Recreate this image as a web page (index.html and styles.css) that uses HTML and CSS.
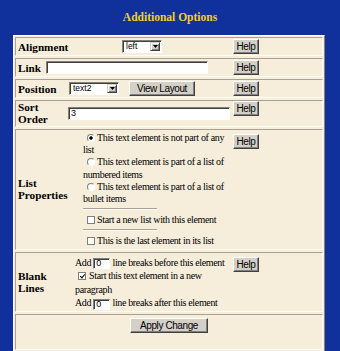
FILE: index.html
```html
<!DOCTYPE html>
<html>
<head>
  <meta charset="utf-8">
  <title>Additional Options</title>
  <link rel="stylesheet" href="styles.css">
</head>
<body>
    <h1 class="title">Additional Options</h1>
    <form class="options">
        <div class="row row-align">
            <div class="label">Alignment</div>
            <div class="field">
                <span class="select select-align">
                    <span class="select-text">left</span>
                    <span class="select-btn"><svg width="5" height="3" viewBox="0 0 5 3"><path d="M0 0h5L2.5 3z" fill="#000"/></svg></span>
                </span>
            </div>
            <button type="button" class="btn help">Help</button>
        </div>
        <div class="row row-link">
            <div class="label">Link</div>
            <div class="field"><input type="text" class="text-input wide"></div>
            <button type="button" class="btn help">Help</button>
        </div>
        <div class="row row-pos">
            <div class="label">Position</div>
            <div class="field">
                <span class="select select-pos">
                    <span class="select-text">text2</span>
                    <span class="select-btn"><svg width="5" height="3" viewBox="0 0 5 3"><path d="M0 0h5L2.5 3z" fill="#000"/></svg></span>
                </span>
                <button type="button" class="btn view-btn">View Layout</button>
            </div>
            <button type="button" class="btn help">Help</button>
        </div>
        <div class="row row-sort">
            <div class="label">Sort<br>Order</div>
            <div class="field"><input type="text" class="text-input wide" value="3"></div>
            <button type="button" class="btn help">Help</button>
        </div>
        <div class="row row-list">
            <div class="label">List<br>Properties</div>
            <div class="field lines">
                <div><input type="radio" name="list" class="radio" checked>This text element is not part of any list</div>
                <div><input type="radio" name="list" class="radio">This text element is part of a list of numbered items</div>
                <div><input type="radio" name="list" class="radio">This text element is part of a list of bullet items</div>
                <hr class="sep">
                <div><input type="checkbox" class="check">Start a new list with this element</div>
                <hr class="sep">
                <div><input type="checkbox" class="check">This is the last element in its list</div>
            </div>
            <button type="button" class="btn help help-top">Help</button>
        </div>
        <div class="row row-blank">
            <div class="label">Blank<br>Lines</div>
            <div class="field lines">
                <div>Add <input type="text" class="text-input num" value="0"> line breaks before this element</div>
                <div><input type="checkbox" class="check check-blank" checked>Start this text element in a new paragraph</div>
                <div>Add <input type="text" class="text-input num" value="0"> line breaks after this element</div>
            </div>
            <button type="button" class="btn help help-top">Help</button>
        </div>
        <div class="row row-apply">
            <button type="button" class="btn apply-btn">Apply Change</button>
        </div>
    </form>
</body>
</html>
```

FILE: styles.css
```css
* {
    box-sizing: border-box;
}
body {
    margin: 0;
    background-color: #10309c;
    font-family: "Liberation Serif", "Times New Roman", serif;
    font-size: 10px;
    letter-spacing: -0.35px;
    color: #000;
}
.title {
    margin: 10px 0 11px;
    font-size: 11.5px;
    line-height: 14px;
    letter-spacing: 0;
    text-align: center;
    color: #f0d020;
}

/* Outer table */
.options {
    display: flex;
    flex-direction: column;
    gap: 2px;
    width: 312px;
    margin: 0 13px;
    padding: 1px;
    border: 1px solid;
    border-color: #fffaf0 #8a857a #8a857a #fffaf0;
    background-color: #f6eddb;
}
.row {
    display: grid;
    grid-template-columns: var(--lw) calc(217px - var(--lw)) 26px 1fr;
    padding: 1px 0;
    border: 1px solid;
    border-color: #a9a193 #fffdf6 #fffdf6 #a9a193;
}
.row-align { --lw: 106px; }
.row-link { --lw: 30px; }
.row-pos { --lw: 53px; }
.row-sort { --lw: 52px; padding-top: 0; }
.row-list { --lw: 67px; }
.row-blank { --lw: 59px; }
.row-apply {
    display: block;
    padding: 3px 0 16px;
    text-align: center;
}
.label {
    align-self: center;
    padding-left: 2px;
    font-size: 11.2px;
    font-weight: bold;
    line-height: 12px;
    letter-spacing: 0;
}
.field {
    display: flex;
    align-items: center;
    gap: 10px;
    align-self: center;
}
.lines {
    display: block;
    align-self: start;
    line-height: 12.2px;
    padding-top: 1px;
}
.row-blank .lines {
    line-height: 13.6px;
    padding-top: 2px;
}
.sep {
    width: 74px;
    height: 0;
    margin: 3px 0 4px;
    border: 0;
    border-top: 1px solid #a9a193;
    border-bottom: 1px solid #fffdf6;
}

/* Controls */
.btn {
    height: 15px;
    padding: 0;
    border: 1px solid;
    border-color: #fff #404040 #404040 #fff;
    box-shadow: inset -1px -1px #808080;
    background-color: #d4d0c8;
    font-family: "Liberation Sans", Arial, sans-serif;
    font-size: 10px;
    letter-spacing: -0.4px;
    color: #000;
}
.help {
    width: 26px;
    align-self: start;
}
.help-top {
    margin-top: 3px;
}
.view-btn {
    width: 66px;
}
.apply-btn {
    width: 78px;
}
.text-input {
    height: 13px;
    padding: 0 2px;
    border: 1px solid;
    border-color: #808080 #fff #fff #808080;
    box-shadow: inset 1px 1px #404040;
    background-color: #fff;
    font-family: "Liberation Sans", Arial, sans-serif;
    font-size: 9px;
    letter-spacing: 0;
    outline: none;
}
.wide {
    width: 162px;
}
.num {
    width: 17px;
    height: 11px;
    vertical-align: middle;
}
.select {
    display: inline-flex;
    height: 13px;
    padding: 1px;
    border: 1px solid;
    border-color: #808080 #fff #fff #808080;
    box-shadow: inset 1px 1px #404040;
    background-color: #fff;
}
.select-align { width: 40px; }
.select-pos { width: 50px; }
.select-text {
    flex: 1;
    padding-left: 2px;
    font-family: "Liberation Sans", Arial, sans-serif;
    font-size: 8.5px;
    line-height: 9px;
    letter-spacing: 0;
}
.select-btn {
    display: flex;
    align-items: center;
    justify-content: center;
    width: 10px;
    border: 1px solid;
    border-color: #d4d0c8 #404040 #404040 #d4d0c8;
    box-shadow: inset 1px 1px #fff, inset -1px -1px #808080;
    background-color: #d4d0c8;
}
.radio, .check {
    appearance: none;
    width: 8px;
    height: 8px;
    margin: 0 2px 0 4px;
    border: 1px solid;
    border-color: #808080 #fff #fff #808080;
    background-color: #fff;
    vertical-align: -1px;
}
.radio {
    border-radius: 50%;
}
.radio:checked {
    background: radial-gradient(circle, #000 0 1.4px, #fff 2px);
}
.check {
    position: relative;
    border-color: #808080;
}
.check-blank {
    margin: 0 3px 0 3px;
}
.check:checked::after {
    content: "";
    position: absolute;
    left: 1.5px;
    top: -0.5px;
    width: 2px;
    height: 4px;
    border: solid #000;
    border-width: 0 1.5px 1.5px 0;
    transform: rotate(40deg);
}
```
